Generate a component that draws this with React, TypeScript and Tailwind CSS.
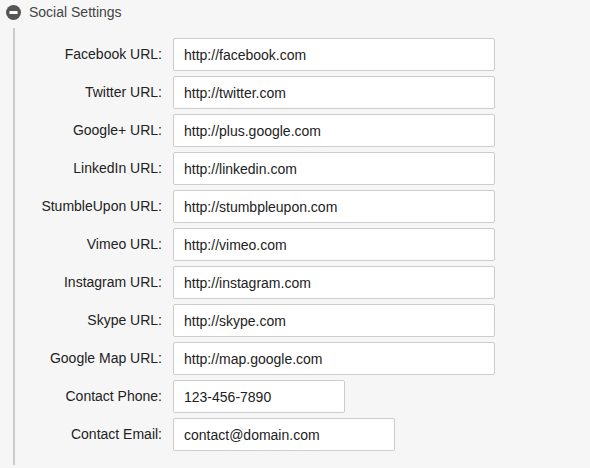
const fields = [
  { label: "Facebook URL:", value: "http://facebook.com", w: "w-[322px]" },
  { label: "Twitter URL:", value: "http://twitter.com", w: "w-[322px]" },
  { label: "Google+ URL:", value: "http://plus.google.com", w: "w-[322px]" },
  { label: "LinkedIn URL:", value: "http://linkedin.com", w: "w-[322px]" },
  { label: "StumbleUpon URL:", value: "http://stumbpleupon.com", w: "w-[322px]" },
  { label: "Vimeo URL:", value: "http://vimeo.com", w: "w-[322px]" },
  { label: "Instagram URL:", value: "http://instagram.com", w: "w-[322px]" },
  { label: "Skype URL:", value: "http://skype.com", w: "w-[322px]" },
  { label: "Google Map URL:", value: "http://map.google.com", w: "w-[322px]" },
  { label: "Contact Phone:", value: "123-456-7890", w: "w-[172px]" },
  { label: "Contact Email:", value: "contact@domain.com", w: "w-[222px]" },
];

export default function App() {
  return (
    <div className="min-h-[468px] bg-[#f6f6f6] font-['Liberation_Sans',Arial,sans-serif] text-[14px]">
      {/* header */}
      <div className="flex h-[28px] items-start pl-[6px] pt-[5px]">
        <svg width="15" height="15" viewBox="0 0 15 15" className="mr-[8px] shrink-0">
          <circle cx="7.5" cy="7.5" r="7.5" fill="#555555" />
          <rect x="3.5" y="6" width="8" height="3" fill="#ffffff" />
        </svg>
        <span className="leading-[15px] text-[#444444]">Social Settings</span>
      </div>

      {/* fields */}
      <div className="ml-[13px] flex flex-col gap-[5px] border-l-2 border-[#cccccc] pb-[14px] pt-[10px]">
        {fields.map((f) => (
          <div key={f.label} className="flex items-center">
            <label className="w-[147px] shrink-0 text-right text-[#222222]">{f.label}</label>
            <input
              readOnly
              value={f.value}
              className={`${f.w} ml-[11px] h-[33px] rounded-[2px] border border-[#cccccc] bg-white px-[10px] text-[14px] text-[#222222] outline-none`}
            />
          </div>
        ))}
      </div>
    </div>
  );
}
